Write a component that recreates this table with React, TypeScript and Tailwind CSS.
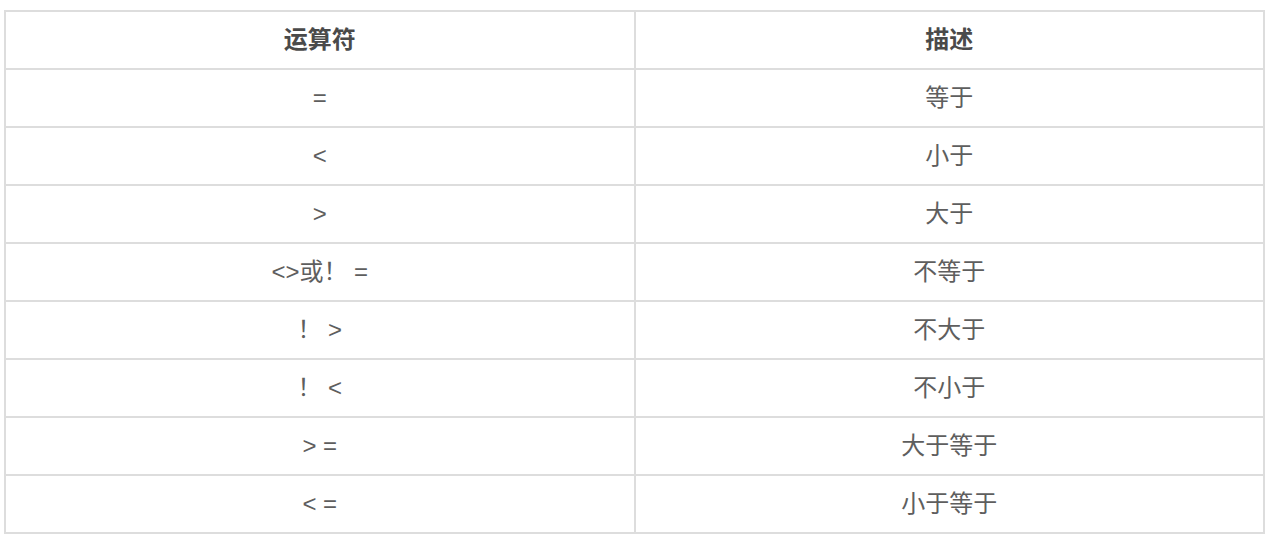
const rows: [string, string][] = [
  ["=", "等于"],
  ["<", "小于"],
  [">", "大于"],
  ["<>或！ =", "不等于"],
  ["！ >", "不大于"],
  ["！ <", "不小于"],
  ["> =", "大于等于"],
  ["< =", "小于等于"],
];

export default function App() {
  return (
    <div className="min-h-[536px] bg-white pt-[10px] pl-1 font-['Liberation_Sans','Noto_Sans_CJK_SC',sans-serif] text-[24px]">
      <table className="w-[1261px] table-fixed border-collapse border-2 border-[#dddddd]">
        <thead>
          <tr>
            <th className="h-[58px] border-2 border-[#dddddd] font-bold text-[#4a4a4a]">
              运算符
            </th>
            <th className="h-[58px] border-2 border-[#dddddd] font-bold text-[#4a4a4a]">
              描述
            </th>
          </tr>
        </thead>
        <tbody>
          {rows.map(([op, desc]) => (
            <tr key={desc}>
              <td className="h-[58px] border-2 border-[#dddddd] text-center text-[#5e5e5e]">
                {op}
              </td>
              <td className="h-[58px] border-2 border-[#dddddd] text-center text-[#5e5e5e]">
                {desc}
              </td>
            </tr>
          ))}
        </tbody>
      </table>
    </div>
  );
}
